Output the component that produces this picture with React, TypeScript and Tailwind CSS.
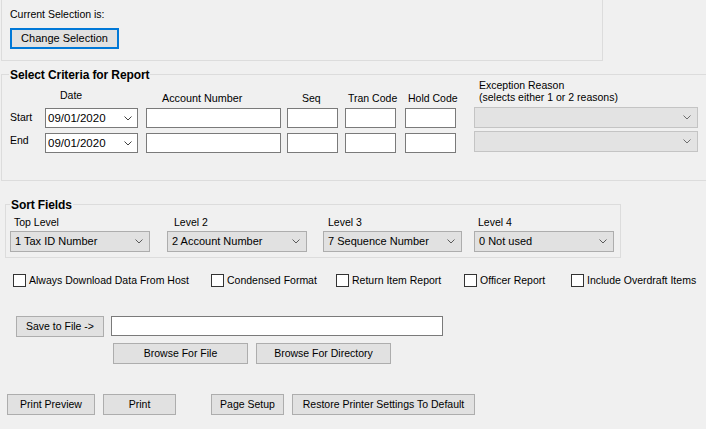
import React from "react";

const Chevron = ({ color = "#5a5a5a" }: { color?: string }) => (
	<svg width="8" height="5" viewBox="0 0 8 5" className="shrink-0">
		<polyline points="0.5,0.5 4,4 7.5,0.5" fill="none" stroke={color} strokeWidth="1" />
	</svg>
);

const Btn = ({ label, w, className = "" }: { label: string; w: string; className?: string }) => (
	<div
		className={`${w} h-[21px] shrink-0 border border-[#adadad] bg-[#e1e1e1] flex items-center justify-center ${className}`}
	>
		{label}
	</div>
);

const TextBox = ({ w, className = "" }: { w: string; className?: string }) => (
	<div className={`${w} h-[20px] shrink-0 border border-[#7a7a7a] bg-white ${className}`} />
);

const DatePicker = ({ value, className = "" }: { value: string; className?: string }) => (
	<div
		className={`w-[93px] h-[20px] border border-[#7a7a7a] bg-white flex items-center justify-between pl-[2px] pr-[5px] ${className}`}
	>
		<span className="text-[11.5px]">{value}</span>
		<Chevron color="#404040" />
	</div>
);

const Combo = ({
	value = "",
	w,
	disabled = false,
	className = "",
}: {
	value?: string;
	w: string;
	disabled?: boolean;
	className?: string;
}) => (
	<div
		className={`${w} h-[21px] shrink-0 border flex items-center justify-between pl-[4px] pr-[6px] ${
			disabled ? "border-[#c4c4c4] bg-[#e3e3e3]" : "border-[#adadad] bg-[#e1e1e1]"
		} ${className}`}
	>
		<span className="text-[11px]">{value}</span>
		<Chevron color={disabled ? "#6d6d6d" : "#5a5a5a"} />
	</div>
);

const Check = ({ label, w }: { label: string; w?: string }) => (
	<div className={`${w ?? ""} flex items-center gap-[3px] shrink-0`}>
		<div className="w-[13px] h-[13px] border border-[#333333] bg-white" />
		<span>{label}</span>
	</div>
);

const GroupBox = ({
	title,
	className,
	legendLeft,
	children,
}: {
	title: string;
	className: string;
	legendLeft: string;
	children: React.ReactNode;
}) => (
	<div className={`relative border border-[#dcdcdc] ${className}`}>
		<span
			className={`absolute -top-[7px] ${legendLeft} bg-[#f0f0f0] px-[1px] text-[12px] leading-[14px] font-bold tracking-[-0.1px]`}
		>
			{title}
		</span>
		{children}
	</div>
);

export default function App() {
	return (
		<div className="w-[706px] h-[429px] overflow-hidden bg-[#f0f0f0] text-black text-[10.5px] leading-[13px] font-['Liberation_Sans',Arial,sans-serif] flex flex-col">
			{/* current selection */}
			<div className="ml-[1px] w-[602px] h-[61px] shrink-0 border-x border-b border-[#dcdcdc] pl-[8px] pt-[8px]">
				<div>Current Selection is:</div>
				<div className="mt-[7px] w-[109px] h-[21px] border-2 border-[#0078d7] bg-[#e1e1e1] flex items-center justify-center text-[11px]">
					Change Selection
				</div>
			</div>

			{/* criteria */}
			<GroupBox
				title="Select Criteria for Report"
				className="mt-[13px] ml-[1px] w-[720px] h-[107px] shrink-0"
				legendLeft="left-[7px]"
			>
				<div className="flex">
					<div className="ml-[8px] w-[35px] pt-[36px]">
						<div>Start</div>
						<div className="mt-[10px]">End</div>
					</div>
					<div className="w-[93px]">
						<div className="h-[33px] pt-[14px] pl-[15px]">Date</div>
						<DatePicker value="09/01/2020" />
						<DatePicker value="09/01/2020" className="mt-[5px]" />
					</div>
					<div className="ml-[8px] w-[135px]">
						<div className="h-[33px] pt-[17px] pl-[16px] text-[10.8px]">Account Number</div>
						<TextBox w="w-[135px]" />
						<TextBox w="w-[135px]" className="mt-[5px]" />
					</div>
					<div className="ml-[6px] w-[51px]">
						<div className="h-[33px] pt-[17px] pl-[15px]">Seq</div>
						<TextBox w="w-[51px]" />
						<TextBox w="w-[51px]" className="mt-[5px]" />
					</div>
					<div className="ml-[7px] w-[51px]">
						<div className="h-[33px] pt-[17px] pl-[3px] whitespace-nowrap">Tran Code</div>
						<TextBox w="w-[51px]" />
						<TextBox w="w-[51px]" className="mt-[5px]" />
					</div>
					<div className="ml-[9px] w-[51px]">
						<div className="h-[33px] pt-[17px] pl-[3px] whitespace-nowrap">Hold Code</div>
						<TextBox w="w-[51px]" />
						<TextBox w="w-[51px]" className="mt-[5px]" />
					</div>
					<div className="ml-[18px] w-[224px]">
						<div className="h-[32px] pt-[4px] pl-[5px] leading-[12px]">
							<div>Exception Reason</div>
							<div>(selects either 1 or 2 reasons)</div>
						</div>
						<Combo w="w-[224px]" disabled />
						<Combo w="w-[224px]" disabled className="mt-[3px]" />
					</div>
				</div>
			</GroupBox>

			{/* sort fields */}
			<GroupBox
				title="Sort Fields"
				className="mt-[23px] ml-[5px] w-[616px] h-[54px] shrink-0"
				legendLeft="left-[4px]"
			>
				<div className="flex">
					<div className="ml-[4px]">
						<div className="h-[26px] pt-[11px] pl-[4px]">Top Level</div>
						<Combo w="w-[140px]" value="1 Tax ID Number" />
					</div>
					<div className="ml-[17px]">
						<div className="h-[26px] pt-[11px] pl-[7px]">Level 2</div>
						<Combo w="w-[140px]" value="2 Account Number" />
					</div>
					<div className="ml-[16px]">
						<div className="h-[26px] pt-[11px] pl-[5px]">Level 3</div>
						<Combo w="w-[139px]" value="7 Sequence Number" />
					</div>
					<div className="ml-[12px]">
						<div className="h-[26px] pt-[11px] pl-[4px]">Level 4</div>
						<Combo w="w-[140px]" value="0 Not used" />
					</div>
				</div>
			</GroupBox>

			{/* options */}
			<div className="mt-[16px] ml-[13px] flex h-[13px] items-center">
				<Check w="w-[198px]" label="Always Download Data From Host" />
				<Check w="w-[125px]" label="Condensed Format" />
				<Check w="w-[128px]" label="Return Item Report" />
				<Check w="w-[107px]" label="Officer Report" />
				<Check label="Include Overdraft Items" />
			</div>

			{/* save to file */}
			<div className="mt-[29px] flex items-start">
				<Btn label="Save to File ->" w="w-[88px]" className="ml-[16px]" />
				<TextBox w="w-[332px]" className="ml-[7px]" />
			</div>
			<div className="mt-[6px] flex">
				<Btn label="Browse For File" w="w-[135px]" className="ml-[113px]" />
				<Btn label="Browse For Directory" w="w-[135px]" className="ml-[8px]" />
			</div>

			{/* printing */}
			<div className="mt-[30px] flex">
				<Btn label="Print Preview" w="w-[88px]" className="ml-[7px]" />
				<Btn label="Print" w="w-[73px]" className="ml-[8px]" />
				<Btn label="Page Setup" w="w-[73px]" className="ml-[35px]" />
				<Btn label="Restore Printer Settings To Default" w="w-[183px]" className="ml-[8px]" />
			</div>
		</div>
	);
}
